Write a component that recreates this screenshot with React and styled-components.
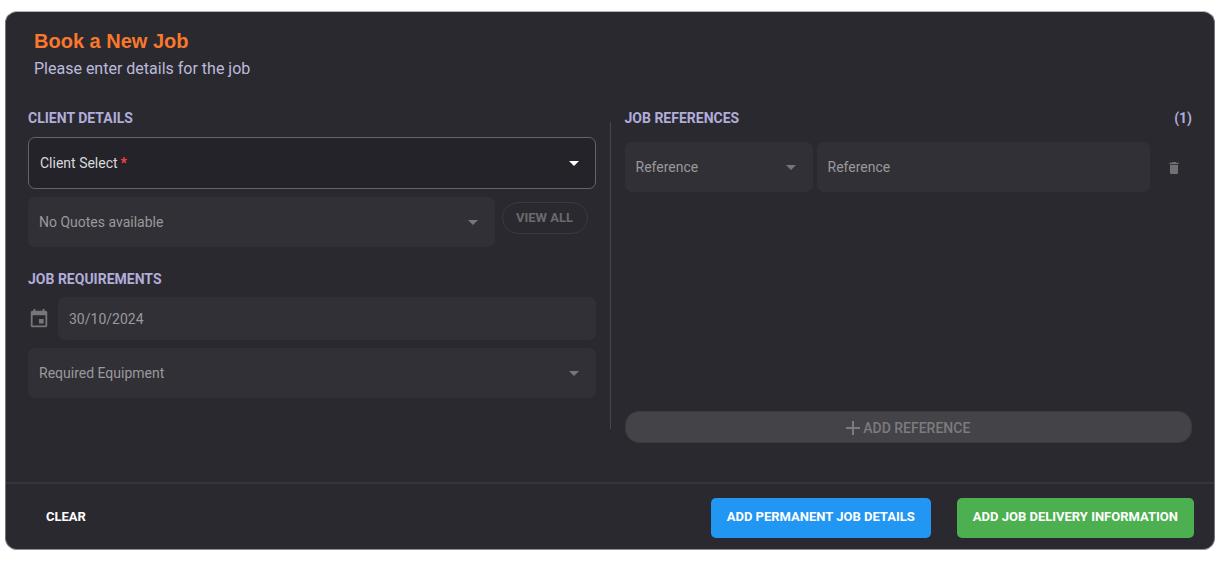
import React from "react";
import styled, { createGlobalStyle } from "styled-components";

const GlobalStyle = createGlobalStyle`
  *, *::before, *::after { box-sizing: border-box; }
  body {
    margin: 0;
    background: #ffffff;
    font-family: Roboto, "Liberation Sans", sans-serif;
    font-size: 14px;
  }
  button, input, select { font: inherit; margin: 0; }
`;

const Card = styled.form`
  margin: 11px 11px 16px 5px;
  border: 1px solid #77747f;
  border-top-color: #b5b4b8;
  border-bottom-color: #8f8d94;
  border-radius: 12px;
  background: #2a292f;
  overflow: hidden;
`;

const Header = styled.header`
  padding: 16px 28px 27px;
`;

const Title = styled.h1`
  margin: 0 0 3px;
  font: 700 20px/26px "Liberation Sans", Arial, sans-serif;
  color: #f9782b;
`;

const Subtitle = styled.p`
  margin: 0;
  font-size: 16px;
  line-height: 24px;
  color: #bcbbdc;
`;

const Body = styled.div`
  display: grid;
  grid-template-columns: minmax(0, 1fr) 1px minmax(0, 1fr);
  column-gap: 14px;
  min-height: 374px;
  padding: 0 22px 39px;
`;

const Column = styled.div`
  display: flex;
  flex-direction: column;
`;

const Divider = styled.div`
  margin: 14px 0;
  background: #47464c;
`;

const Section = styled.section`
  display: flex;
  flex-direction: column;
  gap: 8px;
  & + & { margin-top: 22px; }
`;

const SectionHead = styled.div`
  display: flex;
  justify-content: space-between;
  margin-bottom: ${(p) => p.$space || 0}px;
  line-height: 20px;
  font-weight: 700;
  color: #b1add9;
`;

const SectionTitle = styled.h2`
  margin: 0;
  font-size: 14px;
  font-weight: 700;
`;

const Row = styled.div`
  display: flex;
  align-items: center;
  gap: ${(p) => p.$gap}px;
`;

const Field = styled.div`
  position: relative;
  flex: ${(p) => (p.$width ? `0 0 ${p.$width}px` : "1 1 0")};
  min-width: 0;
  display: flex;
`;

const Stack = styled.div`
  display: flex;
  flex-direction: column;
`;

const controlHeights = { small: 43, medium: 50, large: 52 };

const Select = styled.select`
  appearance: none;
  width: 100%;
  height: ${(p) => controlHeights[p.$size || "medium"]}px;
  padding: 0 32px 0 11px;
  border: ${(p) => (p.$active ? "1px solid #66636f" : "0")};
  border-radius: 7px;
  background: ${(p) => (p.$active ? "#242329" : "#313036")};
  color: ${(p) => (p.$active ? "#d0d0d2" : "#9a999c")};
  opacity: 1;
`;

const Input = styled.input`
  width: 100%;
  height: ${(p) => controlHeights[p.$size || "medium"]}px;
  padding: 0 11px;
  border: 0;
  border-radius: 7px;
  background: #313036;
  color: #9a999c;
  &::placeholder { color: #9a999c; opacity: 1; }
`;

const FieldLabel = styled.label`
  position: absolute;
  left: 12px;
  top: 0;
  bottom: 0;
  display: flex;
  align-items: center;
  gap: 3px;
  color: #dadadc;
  pointer-events: none;
`;

const Required = styled.span`
  color: #ff4040;
  font-weight: 700;
`;

const Caret = styled.svg`
  position: absolute;
  right: 17px;
  top: 0;
  bottom: 0;
  margin: auto 0;
  width: 10px;
  height: 5px;
  fill: ${(p) => (p.$active ? "#ffffff" : "#77767a")};
  pointer-events: none;
`;

const OutlineButton = styled.button`
  width: 86px;
  height: 32px;
  margin: 0 8px 8px 0;
  padding: 0 0 2px;
  border: 1px solid #3b3a40;
  border-radius: 16px;
  background: transparent;
  font-size: 13px;
  font-weight: 700;
  color: #6a696e;
`;

const IconButton = styled.button`
  display: flex;
  align-items: center;
  justify-content: center;
  width: 38px;
  height: 36px;
  padding: 2px 0 0 2px;
  border: 0;
  background: transparent;
  color: #717075;
`;

const AddButton = styled.button`
  display: flex;
  align-items: center;
  justify-content: center;
  gap: 3px;
  height: 32px;
  margin-top: auto;
  padding: 2px 0 0;
  border: 1px solid #3b3a3f;
  border-radius: 14px;
  background: #444347;
  font-weight: 500;
  color: #7c7b80;
`;

const CalendarIcon = styled.svg`
  flex: none;
  width: 22px;
  height: 22px;
  fill: #77767b;
`;

const Footer = styled.footer`
  display: flex;
  align-items: center;
  justify-content: space-between;
  padding: 14px 20px 11px 22px;
  border-top: 2px solid #36353b;
`;

const tones = { clear: "transparent", primary: "#2196f3", success: "#4caf50" };

const ActionButton = styled.button`
  height: 40px;
  padding: 0 ${(p) => (p.$tone === "clear" ? 18 : 16)}px 3px;
  border: 0;
  border-radius: 5px;
  background: ${(p) => tones[p.$tone]};
  font-size: 13px;
  font-weight: 700;
  color: #ffffff;
`;

function DropDown({ label, active, size, required }) {
  const id = React.useId();
  return (
    <>
      {required && (
        <FieldLabel htmlFor={id}>
          {label}
          <Required>*</Required>
        </FieldLabel>
      )}
      <Select
        id={id}
        aria-label={required ? undefined : label}
        $active={active}
        $size={size}
        disabled={!active}
        required={required}
        defaultValue=""
      >
        <option value="">{required ? "" : label}</option>
      </Select>
      <Caret $active={active} viewBox="0 0 10 5" aria-hidden="true">
        <path d="M0 0h10L5 5z" />
      </Caret>
    </>
  );
}

export default function App() {
  return (
    <>
      <GlobalStyle />
      <Card onSubmit={(e) => e.preventDefault()}>
        <Header>
          <Title>Book a New Job</Title>
          <Subtitle>Please enter details for the job</Subtitle>
        </Header>
        <Body>
          <Column>
            <Section>
              <SectionHead $space={1}>
                <SectionTitle>CLIENT DETAILS</SectionTitle>
              </SectionHead>
              <Stack>
                <Field>
                  <DropDown label="Client Select" size="large" active required />
                </Field>
              </Stack>
              <Row $gap={7}>
                <Field>
                  <DropDown label="No Quotes available" />
                </Field>
                <OutlineButton type="button" disabled>VIEW ALL</OutlineButton>
              </Row>
            </Section>
            <Section>
              <SectionHead>
                <SectionTitle>JOB REQUIREMENTS</SectionTitle>
              </SectionHead>
              <Row $gap={8}>
                <CalendarIcon viewBox="0 0 24 24" aria-hidden="true">
                  <path d="M17 12h-5v5h5v-5zM16 1v2H8V1H6v2H5c-1.110 0-1.990.9-1.990 2L3 19c0 1.100.89 2 2 2h14c1.100 0 2-.9 2-2V5c0-1.100-.9-2-2-2h-1V1h-2zm3 18H5V8h14v11z" />
                </CalendarIcon>
                <Field>
                  <Input aria-label="Job date" $size="small" defaultValue="30/10/2024" disabled />
                </Field>
              </Row>
              <Stack>
                <Field>
                  <DropDown label="Required Equipment" />
                </Field>
              </Stack>
            </Section>
          </Column>
          <Divider />
          <Column>
            <SectionHead $space={14}>
              <SectionTitle>JOB REFERENCES</SectionTitle>
              <span>(1)</span>
            </SectionHead>
            <Row $gap={4}>
              <Field $width={188}>
                <DropDown label="Reference" />
              </Field>
              <Field>
                <Input aria-label="Reference" placeholder="Reference" disabled />
              </Field>
              <IconButton type="button" aria-label="Delete reference" disabled>
                <svg width="16" height="16" viewBox="0 0 24 24" fill="currentColor" aria-hidden="true">
                  <path d="M6 19c0 1.100.9 2 2 2h8c1.100 0 2-.9 2-2V7H6v12zM19 4h-3.500l-1-1h-5l-1 1H5v2h14V4z" />
                </svg>
              </IconButton>
            </Row>
            <AddButton type="button" disabled>
              <svg width="14" height="14" viewBox="0 0 14 14" fill="none" stroke="currentColor" strokeWidth="2" aria-hidden="true">
                <path d="M7 0v14M0 7h14" />
              </svg>
              ADD REFERENCE
            </AddButton>
          </Column>
        </Body>
        <Footer>
          <ActionButton type="reset" $tone="clear">CLEAR</ActionButton>
          <Row $gap={26}>
            <ActionButton type="button" $tone="primary">ADD PERMANENT JOB DETAILS</ActionButton>
            <ActionButton type="submit" $tone="success">ADD JOB DELIVERY INFORMATION</ActionButton>
          </Row>
        </Footer>
      </Card>
    </>
  );
}
